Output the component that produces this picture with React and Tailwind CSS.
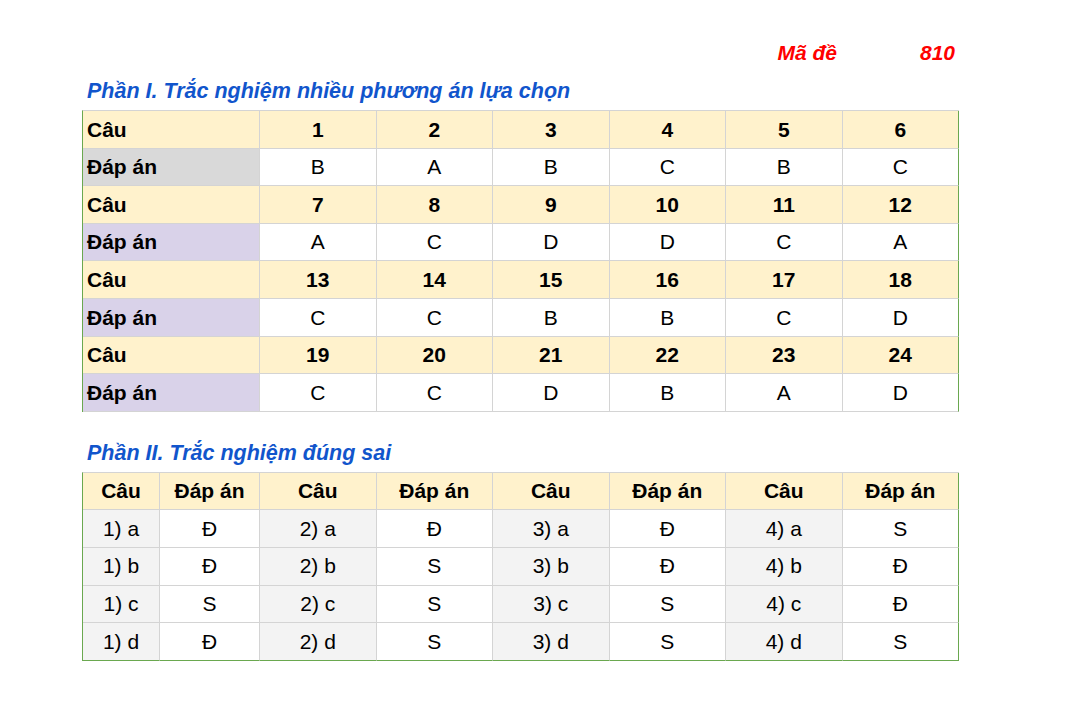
const part1 = [
  { nums: [1, 2, 3, 4, 5, 6], ans: ['B', 'A', 'B', 'C', 'B', 'C'], first: true },
  { nums: [7, 8, 9, 10, 11, 12], ans: ['A', 'C', 'D', 'D', 'C', 'A'] },
  { nums: [13, 14, 15, 16, 17, 18], ans: ['C', 'C', 'B', 'B', 'C', 'D'] },
  { nums: [19, 20, 21, 22, 23, 24], ans: ['C', 'C', 'D', 'B', 'A', 'D'] },
]

const part2 = [
  ['a', ['Đ', 'Đ', 'Đ', 'S']],
  ['b', ['Đ', 'S', 'Đ', 'Đ']],
  ['c', ['S', 'S', 'S', 'Đ']],
  ['d', ['Đ', 'S', 'S', 'S']],
]

const cell = 'h-[37.6px] flex items-center border-r border-b border-[#d4d4d4]'

export default function App() {
  return (
    <div
      className="min-h-[701px] bg-white pl-[82px] pt-[41px] text-black"
      style={{ fontFamily: '"Liberation Sans", Arial, sans-serif' }}
    >
      <div className="w-[877px]">
        {/* Mã đề */}
        <div className="flex justify-end pr-[4px] text-[21px] font-bold italic text-[#ff0000] leading-[24px]">
          <span>Mã đề</span>
          <span className="ml-[83px]">810</span>
        </div>

        <h2 className="mt-[14px] pl-[5px] text-[21.5px] font-bold italic text-[#1155cc] leading-[24px]">
          Phần I. Trắc nghiệm nhiều phương án lựa chọn
        </h2>

        {/* Part I table */}
        <div className="mt-[7px] grid grid-cols-[177px_repeat(6,1fr)] border-t border-[#d4d4d4] border-l border-l-[#6aa84f] text-[21px]">
          {part1.map((r, i) => (
            <Rows key={i} r={r} />
          ))}
        </div>

        <h2 className="mt-[29px] pl-[5px] text-[21.5px] font-bold italic text-[#1155cc] leading-[24px]">
          Phần II. Trắc nghiệm đúng sai
        </h2>

        {/* Part II table */}
        <div className="mt-[7px] grid grid-cols-[77px_100px_repeat(6,1fr)] border-t border-[#d4d4d4] border-l border-l-[#6aa84f] text-[21px]">
          {[0, 1, 2, 3].map((g) => (
            <Header key={g} last={g === 3} />
          ))}
          {part2.map(([letter, vals], ri) =>
            vals.map((v, gi) => (
              <Pair key={ri + '-' + gi} q={`${gi + 1}) ${letter}`} v={v} last={gi === 3} bottom={ri === 3} />
            ))
          )}
        </div>
      </div>
    </div>
  )
}

function Rows({ r }) {
  return (
    <>
      <div className={`${cell} bg-[#fff2cc] pl-[4px] font-bold`}>Câu</div>
      {r.nums.map((n, j) => (
        <div
          key={n}
          className={`${cell} justify-center bg-[#fff2cc] font-bold ${j === 5 ? 'border-r-[#6aa84f]' : ''}`}
        >
          {n}
        </div>
      ))}
      <div className={`${cell} pl-[4px] font-bold ${r.first ? 'bg-[#d9d9d9]' : 'bg-[#d9d2e9]'}`}>Đáp án</div>
      {r.ans.map((a, j) => (
        <div key={j} className={`${cell} justify-center bg-white ${j === 5 ? 'border-r-[#6aa84f]' : ''}`}>
          {a}
        </div>
      ))}
    </>
  )
}

function Header({ last }) {
  return (
    <>
      <div className={`${cell} justify-center bg-[#fff2cc] font-bold`}>Câu</div>
      <div className={`${cell} justify-center bg-[#fff2cc] font-bold ${last ? 'border-r-[#6aa84f]' : ''}`}>Đáp án</div>
    </>
  )
}

function Pair({ q, v, last, bottom }) {
  const b = bottom ? 'border-b-[#6aa84f]' : ''
  return (
    <>
      <div className={`${cell} ${b} justify-center bg-[#f3f3f3]`}>{q}</div>
      <div className={`${cell} ${b} justify-center bg-white ${last ? 'border-r-[#6aa84f]' : ''}`}>{v}</div>
    </>
  )
}
